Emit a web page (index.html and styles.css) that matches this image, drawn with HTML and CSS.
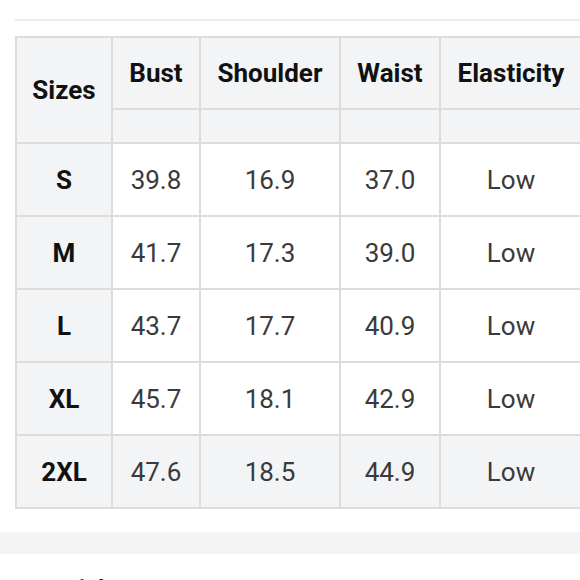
FILE: index.html
```html
<!DOCTYPE html>
<html>
<head>
<meta charset="utf-8">
<link rel="stylesheet" href="styles.css">
</head>
<body>
<div class="page">
  <div class="rule"></div>
  <div class="size-table">
    <div class="cell head sizes-head">Sizes</div>
    <div class="cell head">Bust</div>
    <div class="cell head">Shoulder</div>
    <div class="cell head">Waist</div>
    <div class="cell head">Elasticity</div>
    <div class="cell head sub"></div>
    <div class="cell head sub"></div>
    <div class="cell head sub"></div>
    <div class="cell head sub"></div>

    <div class="cell label">S</div>
    <div class="cell">39.8</div>
    <div class="cell">16.9</div>
    <div class="cell">37.0</div>
    <div class="cell">Low</div>

    <div class="cell label">M</div>
    <div class="cell">41.7</div>
    <div class="cell">17.3</div>
    <div class="cell">39.0</div>
    <div class="cell">Low</div>

    <div class="cell label">L</div>
    <div class="cell">43.7</div>
    <div class="cell">17.7</div>
    <div class="cell">40.9</div>
    <div class="cell">Low</div>

    <div class="cell label">XL</div>
    <div class="cell">45.7</div>
    <div class="cell">18.1</div>
    <div class="cell">42.9</div>
    <div class="cell">Low</div>

    <div class="cell label shade">2XL</div>
    <div class="cell shade">47.6</div>
    <div class="cell shade">18.5</div>
    <div class="cell shade">44.9</div>
    <div class="cell shade">Low</div>
  </div>
  <div class="band"></div>
  <div class="next-title">Material</div>
</div>
</body>
</html>
```

FILE: styles.css
```css
html, body {
  margin: 0;
  padding: 0;
  background: #ffffff;
  overflow: hidden;
}

.page {
  width: 580px;
  height: 580px;
  overflow: hidden;
  font-family: Roboto, "Liberation Sans", sans-serif;
}

.rule {
  margin: 19px 0 0 15px;
  height: 2px;
  background: #ececec;
}

.size-table {
  margin: 15px 0 0 15px;
  width: 570px;
  display: grid;
  grid-template-columns: 94px 86px 138px 98px 140px;
  grid-template-rows: 70px 32px 71px 71px 71px 71px 71px;
  gap: 2px;
  padding: 2px;
  background: #dcdcdc;
}

.cell {
  display: flex;
  align-items: center;
  justify-content: center;
  background: #ffffff;
  font-size: 26px;
  color: #3a3a3a;
}

.head {
  background: #f3f4f6;
  font-weight: 700;
  color: #111111;
}

.sizes-head {
  grid-row: span 2;
}

.label {
  background: #f3f4f6;
  font-weight: 700;
  color: #111111;
}

.shade {
  background: #f3f4f6;
}

.band {
  margin-top: 23px;
  height: 22px;
  background: #f3f4f6;
}

.next-title {
  margin: 21px 0 0 15px;
  font-size: 24px;
  font-weight: 700;
  color: #222222;
}
```
